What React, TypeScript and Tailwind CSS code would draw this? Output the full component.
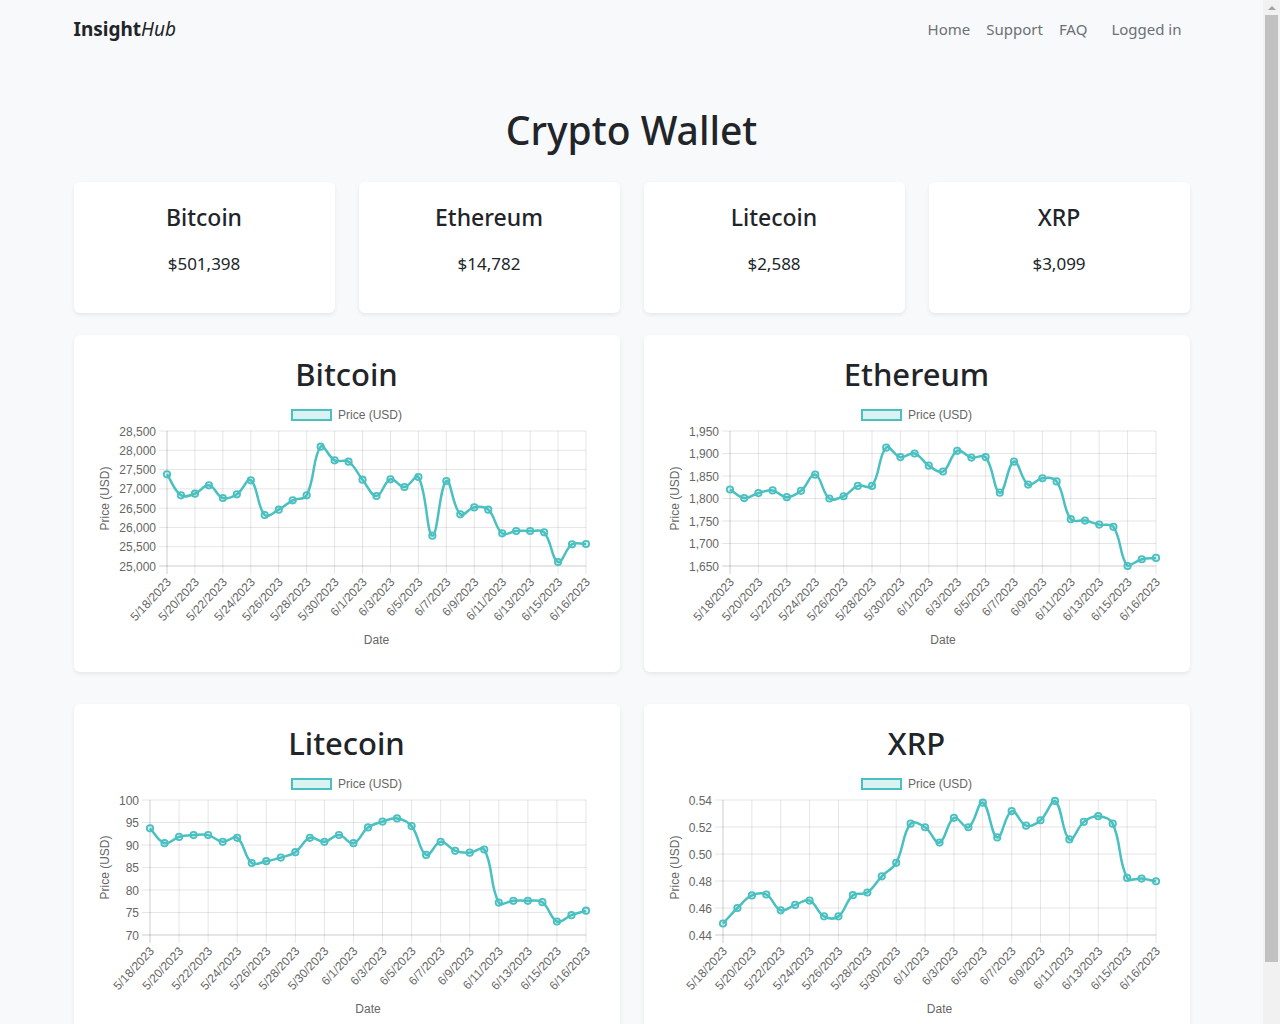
import React from 'react';

type Point = { x: number; y: number };

type ChartConfig = {
  name: string;
  data: number[];
  min: number;
  max: number;
  step: number;
  decimals: number;
  plotLeft: number;
};

const TEAL = 'rgb(75,192,192)';
const TEAL_FILL = 'rgba(75,192,192,0.2)';
const GRID = 'rgba(0,0,0,0.1)';
const AXIS = 'rgba(0,0,0,0.2)';
const TICK_COLOR = '#666';
const CHART_FONT = 'Liberation Sans, Arial, sans-serif';

const PLOT_TOP = 31;
const PLOT_BOTTOM = 166;
const PLOT_RIGHT = 496;
const CANVAS_W = 514;
const CANVAS_H = 256;

const xLabels = [
  '5/18/2023', '5/20/2023', '5/22/2023', '5/24/2023', '5/26/2023', '5/28/2023', '5/30/2023', '6/1/2023',
  '6/3/2023', '6/5/2023', '6/7/2023', '6/9/2023', '6/11/2023', '6/13/2023', '6/15/2023', '6/16/2023',
];

const wallet = [
  { name: 'Bitcoin', value: '$501,398' },
  { name: 'Ethereum', value: '$14,782' },
  { name: 'Litecoin', value: '$2,588' },
  { name: 'XRP', value: '$3,099' },
];

const charts: ChartConfig[] = [
  {
    name: 'Bitcoin',
    data: [
      27377, 26833, 26874, 27092, 26763, 26859, 27222, 26322, 26460, 26703, 26833, 28093, 27740, 27704, 27237,
      26815, 27248, 27048, 27307, 25786, 27204, 26340, 26522, 26460, 25848, 25907, 25907, 25874, 25104, 25563, 25570,
    ],
    min: 25000,
    max: 28500,
    step: 500,
    decimals: 0,
    plotLeft: 77,
  },
  {
    name: 'Ethereum',
    data: [
      1820, 1801, 1812, 1818, 1803, 1817, 1853, 1800, 1805, 1828, 1828, 1913, 1892, 1900, 1873, 1860, 1906, 1891,
      1892, 1813, 1882, 1831, 1845, 1838, 1754, 1751, 1742, 1737, 1650, 1665, 1668,
    ],
    min: 1650,
    max: 1950,
    step: 50,
    decimals: 0,
    plotLeft: 70,
  },
  {
    name: 'Litecoin',
    data: [
      93.7, 90.4, 91.8, 92.2, 92.2, 90.7, 91.6, 86.0, 86.4, 87.2, 88.4, 91.6, 90.7, 92.2, 90.4, 93.9, 95.2, 95.9,
      94.2, 87.8, 90.7, 88.7, 88.3, 89.0, 77.2, 77.6, 77.6, 77.3, 73.0, 74.4, 75.4,
    ],
    min: 70,
    max: 100,
    step: 5,
    decimals: 0,
    plotLeft: 60,
  },
  {
    name: 'XRP',
    data: [
      0.4485, 0.46, 0.4693, 0.47, 0.4583, 0.4623, 0.4655, 0.4538, 0.4538, 0.4695, 0.4715, 0.4835, 0.4935, 0.5225,
      0.5198, 0.5085, 0.5268, 0.5198, 0.538, 0.5123, 0.5318, 0.521, 0.525, 0.5393, 0.5108, 0.5238, 0.528, 0.5225,
      0.4823, 0.4818, 0.4798,
    ],
    min: 0.44,
    max: 0.54,
    step: 0.02,
    decimals: 2,
    plotLeft: 63,
  },
];

// same curve maths as chart.js (splineCurve with tension)
function splinePath(pts: Point[], tension: number) {
  const cps = pts.map((p, i) => {
    const prev = pts[i - 1] ?? p;
    const next = pts[i + 1] ?? p;
    const d01 = Math.hypot(p.x - prev.x, p.y - prev.y);
    const d12 = Math.hypot(next.x - p.x, next.y - p.y);
    const s01 = d01 / (d01 + d12) || 0;
    const s12 = d12 / (d01 + d12) || 0;
    const clamp = (v: number) => Math.min(PLOT_BOTTOM, Math.max(PLOT_TOP, v));
    return {
      px: p.x - tension * s01 * (next.x - prev.x),
      py: clamp(p.y - tension * s01 * (next.y - prev.y)),
      nx: p.x + tension * s12 * (next.x - prev.x),
      ny: clamp(p.y + tension * s12 * (next.y - prev.y)),
    };
  });
  let d = `M${pts[0].x},${pts[0].y}`;
  for (let i = 1; i < pts.length; i++) {
    d += ` C${cps[i - 1].nx},${cps[i - 1].ny} ${cps[i].px},${cps[i].py} ${pts[i].x},${pts[i].y}`;
  }
  return d;
}

const PriceChart: React.FC<{ chart: ChartConfig }> = ({ chart }) => {
  const { data, min, max, step, decimals, plotLeft } = chart;
  const stepX = (PLOT_RIGHT - plotLeft) / (data.length - 1);
  const yOf = (v: number) => PLOT_TOP + ((max - v) / (max - min)) * (PLOT_BOTTOM - PLOT_TOP);
  const points = data.map((v, i) => ({ x: plotLeft + i * stepX, y: yOf(v) }));

  const ticks: number[] = [];
  const count = Math.round((max - min) / step);
  for (let i = 0; i <= count; i++) ticks.push(min + i * step);

  const fmt = (v: number) => (decimals > 0 ? v.toFixed(decimals) : v.toLocaleString('en-US'));
  const midY = (PLOT_TOP + PLOT_BOTTOM) / 2;

  return (
    <svg width={CANVAS_W} height={CANVAS_H} viewBox={`0 0 ${CANVAS_W} ${CANVAS_H}`} fontFamily={CHART_FONT} fontSize="12">
      {/* legend */}
      <rect x="202" y="10" width="39" height="10" fill={TEAL_FILL} stroke={TEAL} strokeWidth="2" />
      <text x="248" y="15" dominantBaseline="central" fill={TICK_COLOR}>
        Price (USD)
      </text>

      {/* horizontal grid + y ticks */}
      {ticks.map((t) => (
        <g key={t}>
          <line x1={plotLeft - 8} x2={PLOT_RIGHT} y1={yOf(t)} y2={yOf(t)} stroke={t === min ? AXIS : GRID} strokeWidth="1" />
          <text x={plotLeft - 11} y={yOf(t) + 0.5} textAnchor="end" dominantBaseline="central" fill={TICK_COLOR}>
            {fmt(t)}
          </text>
        </g>
      ))}

      {/* vertical grid + x ticks */}
      {xLabels.map((label, k) => {
        const x = plotLeft + k * 2 * stepX;
        return (
          <g key={label}>
            <line x1={x} x2={x} y1={PLOT_TOP} y2={PLOT_BOTTOM + 8} stroke={k === 0 ? AXIS : GRID} strokeWidth="1" />
            <text
              x={x + 2}
              y={PLOT_BOTTOM + 14}
              textAnchor="end"
              dominantBaseline="central"
              fill={TICK_COLOR}
              transform={`rotate(-47 ${x + 2} ${PLOT_BOTTOM + 14})`}
            >
              {label}
            </text>
          </g>
        );
      })}

      {/* axis titles */}
      <text x="15" y={midY} textAnchor="middle" dominantBaseline="central" fill={TICK_COLOR} transform={`rotate(-90 15 ${midY})`}>
        Price (USD)
      </text>
      <text x={(plotLeft + PLOT_RIGHT) / 2} y="240" textAnchor="middle" dominantBaseline="central" fill={TICK_COLOR}>
        Date
      </text>

      {/* line + points */}
      <path d={splinePath(points, 0.4)} fill="none" stroke={TEAL} strokeWidth="2.5" strokeLinejoin="round" />
      {points.map((p, i) => (
        <circle key={i} cx={p.x} cy={p.y} r="3.2" fill={TEAL_FILL} stroke={TEAL} strokeWidth="1.8" />
      ))}
    </svg>
  );
};

// window scrollbar as seen in the screenshot
const Scrollbar: React.FC = () => (
  <div className="fixed top-0 right-0 h-screen w-[17px] bg-[#f1f1f1] flex flex-col items-center">
    <div className="h-[15px] flex items-center justify-center">
      <div className="w-0 h-0 border-x-[4px] border-x-transparent border-b-[4px] border-b-[#a3a3a3]" />
    </div>
    <div className="w-[13px] h-[947px] bg-[#c1c1c1]" />
  </div>
);

const App: React.FC = () => {
  return (
    <div className="min-h-screen bg-[#f8f9fa] font-['Noto_Sans',sans-serif] text-[#212529] pr-[17px] pb-12">
      {/* Navbar */}
      <nav className="w-full max-w-[1140px] mx-auto px-3 h-[58px] flex items-center justify-between">
        <a className="text-[19px] text-[#212529]">
          <span className="font-bold">Insight</span>
          <span className="italic">Hub</span>
        </a>
        <div className="flex items-center text-[15px] text-[#6c7075]">
          <a className="px-2">Home</a>
          <a className="px-2">Support</a>
          <a className="px-2">FAQ</a>
          <span className="px-2 ml-2">Logged in</span>
        </div>
      </nav>

      <main className="w-full max-w-[1140px] mx-auto px-3">
        <h1 className="mt-12 mb-[28px] text-center text-[39px] leading-[48px] font-medium">Crypto Wallet</h1>

        {/* Wallet totals */}
        <div className="grid grid-cols-4 gap-6">
          {wallet.map((coin) => (
            <div key={coin.name} className="bg-white rounded-md shadow-[0_2px_4px_rgba(0,0,0,0.075)] text-center pt-[21px] pb-[36px]">
              <h4 className="text-[23px] leading-[29px] font-medium">{coin.name}</h4>
              <p className="mt-[18px] text-[17px] leading-[27px]">{coin.value}</p>
            </div>
          ))}
        </div>

        {/* Charts */}
        <div className="grid grid-cols-2 gap-x-6 gap-y-8 mt-[22px]">
          {charts.map((chart) => (
            <div key={chart.name} className="bg-white rounded-md shadow-[0_2px_4px_rgba(0,0,0,0.075)] px-4 pt-5 pb-4">
              <h2 className="text-center text-[31px] leading-[38px] font-medium mb-[7px]">{chart.name}</h2>
              <PriceChart chart={chart} />
            </div>
          ))}
        </div>
      </main>

      <Scrollbar />
    </div>
  );
};

export default App;
